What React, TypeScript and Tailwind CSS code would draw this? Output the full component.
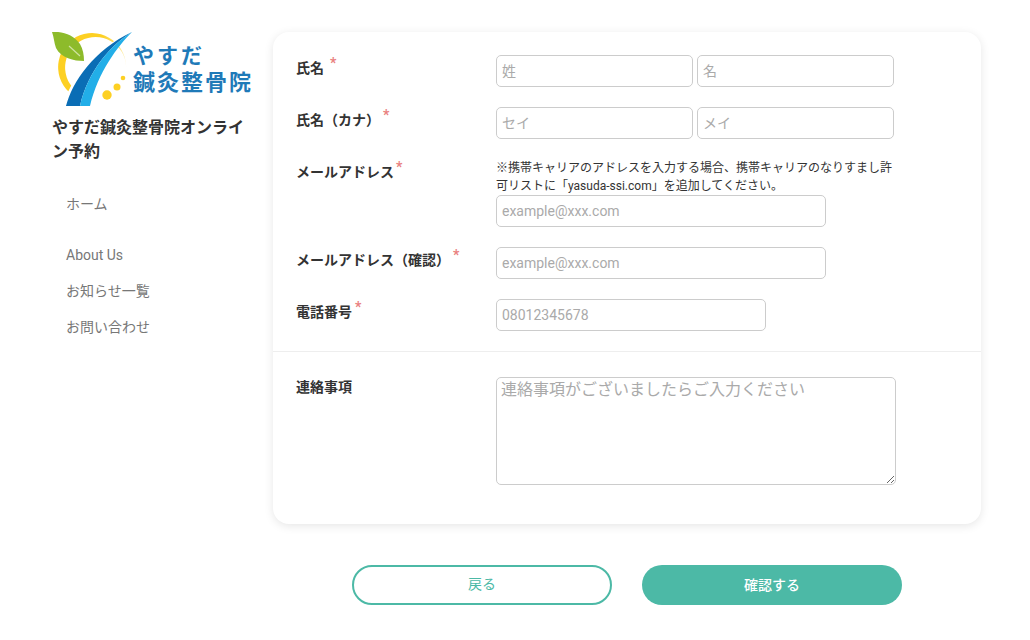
const fontStack = "font-['Roboto','Noto_Sans_CJK_JP',sans-serif]"

function Logo() {
  return (
    <div className="relative h-[74px] w-[201px]">
      <svg width="201" height="74" viewBox="0 0 201 74" className="block">
        <defs>
          <linearGradient id="ring" x1="0" y1="0" x2="1" y2="0">
            <stop offset="0.65" stopColor="#fdd023" />
            <stop offset="1" stopColor="#fdeeb0" />
          </linearGradient>
        </defs>
        <path d="M17 60 A34 34 0 1 1 74 38 A30.5 30.5 0 1 0 23 58 Z" fill="url(#ring)" />
        <path d="M0 0 C10 -1 22 3 28 12 C31 17 32 23 32 29 C22 29 9 26 4 16 C2 11 2 5 0 0 Z" fill="#8dbb2b" />
        <path d="M17 14 L28 24" stroke="#cfe3a0" strokeWidth="1.2" />
        <path d="M11 74 C17 50 40 17 80 0 C44 22 24 50 17 74 Z" fill="#ffffff" />
        <path d="M14 74 C20 50 42 18 80 0 C60 12 36 38 28 74 Z" fill="#0a6db5" />
        <path d="M28 74 C36 38 60 12 80 0 C66 14 46 40 38 74 Z" fill="#22aee8" />
        <circle cx="55" cy="63" r="4.7" fill="#fdd023" />
        <circle cx="65" cy="55" r="3.5" fill="#fdd023" />
        <circle cx="71" cy="46" r="2.3" fill="#fdd023" />
      </svg>
      <div className="absolute left-[81px] top-[14px] flex flex-col gap-[5px] font-bold text-[#1f7ab8]">
        <span className="text-[21px] leading-[21px] tracking-[3px]">やすだ</span>
        <span className="whitespace-nowrap text-[22px] leading-[22px] tracking-[2px]">鍼灸整骨院</span>
      </div>
    </div>
  )
}

function Required({ className }: { className: string }) {
  return <span className={`text-[#e98080] text-sm font-bold leading-none ${className}`}>*</span>
}

function Field({ label, star, children, labelClass = 'pt-[3px]' }: { label: string; star: string; children: React.ReactNode; labelClass?: string }) {
  return (
    <div className="flex">
      <div className={`w-[200px] shrink-0 text-[14px] font-bold leading-5 text-[#333] ${labelClass}`}>
        {label}
        <Required className={star} />
      </div>
      <div>{children}</div>
    </div>
  )
}

function TextInput({ placeholder, width }: { placeholder: string; width: string }) {
  return (
    <input
      placeholder={placeholder}
      className={`block h-8 ${width} rounded-[5px] border border-[#ccc] bg-white px-[5px] text-[14px] placeholder:text-[#aaa] outline-none`}
    />
  )
}

export default function App() {
  return (
    <div className={`min-h-[640px] bg-white flex ${fontStack}`}>
      <aside className="w-[221px] shrink-0 ml-[52px] pt-[32px]">
        <Logo />
        <h1 className="mt-[10px] w-[200px] text-[16px] font-bold leading-[24px] text-[#333]">やすだ鍼灸整骨院オンライン予約</h1>
        <nav className="mt-[22px] pl-[14px] text-[#777] text-[14px]">
          <div className="h-[36px] leading-[36px]">ホーム</div>
          <div className="mt-[15px] h-[36px] leading-[36px]">About Us</div>
          <div className="h-[36px] leading-[36px]">お知らせ一覧</div>
          <div className="h-[36px] leading-[36px]">お問い合わせ</div>
        </nav>
      </aside>

      <div className="w-[708px]">
        <main className="mt-[32px] h-[492px] rounded-[16px] bg-white shadow-[0_2px_10px_rgba(0,0,0,0.1)]">
          <div className="pl-[23px] pt-[23px] flex flex-col gap-5">
            <Field label="氏名" star="ml-[6px] relative top-[-5px]">
              <div className="flex gap-1">
                <TextInput placeholder="姓" width="w-[197px]" />
                <TextInput placeholder="名" width="w-[197px]" />
              </div>
            </Field>
            <Field label="氏名（カナ）" star="ml-[3px] relative top-[-5px]">
              <div className="flex gap-1">
                <TextInput placeholder="セイ" width="w-[197px]" />
                <TextInput placeholder="メイ" width="w-[197px]" />
              </div>
            </Field>
            <Field label="メールアドレス" star="ml-[2px] relative top-[-5px]">
              <p className="w-[400px] text-[12px] leading-[18px] text-[#333]">
                ※携帯キャリアのアドレスを入力する場合、携帯キャリアのなりすまし許可リストに「yasuda-ssi.com」を追加してください。
              </p>
              <TextInput placeholder="example@xxx.com" width="w-[330px]" />
            </Field>
            <Field label="メールアドレス（確認）" star="ml-[3px] relative top-[-5px]">
              <TextInput placeholder="example@xxx.com" width="w-[330px]" />
            </Field>
            <Field label="電話番号" star="ml-[3px] relative top-[-5px]">
              <TextInput placeholder="08012345678" width="w-[270px]" />
            </Field>
          </div>
          <div className="mt-5 border-t border-[#eee]" />
          <div className="pl-[23px] pt-[25px]">
            <Field label="連絡事項" star="hidden" labelClass="">
              <textarea
                placeholder="連絡事項がございましたらご入力ください"
                className="block h-[108px] w-[400px] rounded-[5px] border border-[#ccc] bg-white px-1 py-0 text-[16px] placeholder:text-[#aaa] outline-none"
              />
            </Field>
          </div>
        </main>
        <div className="mt-[41px] pl-[79px] flex gap-[30px]">
          <button className="h-10 w-[260px] rounded-full border-2 border-[#4cb9a6] bg-white pb-[2px] text-[14px] text-[#4cb9a6]">戻る</button>
          <button className="h-10 w-[260px] rounded-full bg-[#4cb9a6] pt-[1px] text-[14px] font-medium text-white">確認する</button>
        </div>
      </div>
    </div>
  )
}
